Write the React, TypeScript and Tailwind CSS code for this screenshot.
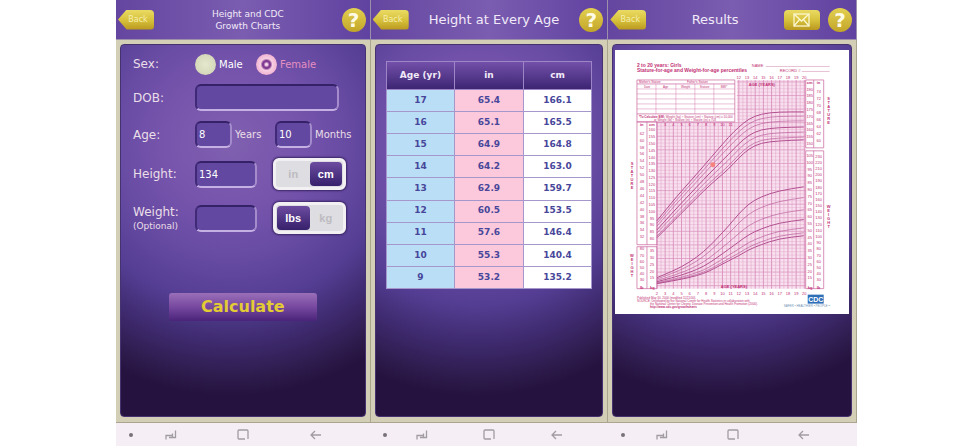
import { ReactNode, useState } from 'react';

const heights = [
  { age: 17, inch: '65.4', cm: '166.1' },
  { age: 16, inch: '65.1', cm: '165.5' },
  { age: 15, inch: '64.9', cm: '164.8' },
  { age: 14, inch: '64.2', cm: '163.0' },
  { age: 13, inch: '62.9', cm: '159.7' },
  { age: 12, inch: '60.5', cm: '153.5' },
  { age: 11, inch: '57.6', cm: '146.4' },
  { age: 10, inch: '55.3', cm: '140.4' },
  { age: 9, inch: '53.2', cm: '135.2' },
];

const HelpButton = () => (
  <button
    type="button"
    aria-label="Help"
    className="size-6 shrink-0 rounded-full bg-linear-to-b from-[#e3d050] to-[#c2a528] text-xl leading-6 font-bold text-[#fffbe6]"
  >
    ?
  </button>
);

const BackButton = () => (
  <button
    type="button"
    className="h-5 w-9 shrink-0 rounded-sm bg-linear-to-b from-[#eadb62] via-[#d8c23c] to-[#b9981f] pl-1 text-[8px] text-[#f6eeb0] [clip-path:polygon(0_50%,24%_0,100%_0,100%_100%,24%_100%)]"
  >
    Back
  </button>
);

const MailButton = () => (
  <button
    type="button"
    aria-label="Email results"
    className="mr-2 flex h-5 w-9 shrink-0 items-center justify-center rounded-sm bg-linear-to-b from-[#eadb62] via-[#d8c23c] to-[#b9981f]"
  >
    <svg width="17" height="14" viewBox="0 0 17 14" fill="none" stroke="#fbf6d0" strokeWidth="1.3">
      <rect x="1" y="1" width="15" height="12" />
      <path d="M1 1l7.500 7L16 1M1 13l5.500-6.500M16 13l-5.500-6.500" />
    </svg>
  </button>
);

const NavBar = () => (
  <div className="grid h-[23px] grid-cols-[12fr_19fr_38fr_19fr_12fr] place-items-center bg-[#f5eff5] text-[#a19ca2]">
    <span className="size-1 rounded-full bg-[#77727a]"></span>
    <button type="button" aria-label="Recent apps">
      <svg width="12" height="10" viewBox="0 0 12 10" fill="none" stroke="currentColor" strokeWidth="1.3">
        <path d="M1 9.500V5.500h6.500M4 7.500h6.500V0.500M7.500 7V3.500" />
      </svg>
    </button>
    <button type="button" aria-label="Home">
      <svg width="12" height="11" viewBox="0 0 12 11" fill="none" stroke="currentColor" strokeWidth="1.3">
        <path d="M8 10H2Q1 10 1 9V2Q1 1 2 1h8q1 0 1 1v8" />
      </svg>
    </button>
    <button type="button" aria-label="Go back">
      <svg width="12" height="10" viewBox="0 0 12 10" fill="none" stroke="currentColor" strokeWidth="1.3">
        <path d="M11 5H1M5 1L1 5l4 4" />
      </svg>
    </button>
  </div>
);

type ScreenProps = { title: ReactNode; action?: ReactNode; children: ReactNode };

const Screen = ({ title, action, children }: ScreenProps) => (
  <section className="flex min-w-0 flex-col">
    <header className="flex h-10 items-center border-r border-b border-[#9c8fa9] bg-linear-to-r from-[#6446a0] via-[#7a5cb0] to-[#6042a0] pr-1 pl-[2px]">
      <BackButton />
      <div className="flex-1 text-center text-[#f1eaf8]">{title}</div>
      {action}
      <HelpButton />
    </header>
    <div className="flex min-h-[383px] flex-1 border-r border-b border-[#aaa58e] bg-[#d2cfb6] p-1 pb-[5px]">
      <div className="min-w-0 flex-1 rounded-[4px] border border-[#463270] bg-[radial-gradient(circle_at_45%_96px,#8060b0_0px,#7654ac_70px,#664aa2_120px,#533d92_165px,#3f2b70_200px,#2e1c4e_235px,#25123e_255px)]">
        {children}
      </div>
    </div>
    <NavBar />
  </section>
);

const inputClass =
  'h-[27px] rounded-md border-2 border-t-[#352168] border-r-[#a48ccc] border-b-[#c4b0e2] border-l-[#402a78] bg-[#6248a0] px-[2px] text-[10px] text-white outline-none';

type ToggleProps = { label: string; options: string[]; value: string; onChange: (v: string) => void };

const UnitToggle = ({ label, options, value, onChange }: ToggleProps) => (
  <div
    role="group"
    aria-label={label}
    className="ml-4 flex h-8 w-[73px] rounded-md border-[3px] border-[#f3f0f4] bg-[#dedde1] p-px font-[Liberation_Sans,sans-serif] text-[11px] font-bold shadow-[0_0_2px_1px_#3a2465]"
  >
    {options.map((o) => (
      <button
        key={o}
        type="button"
        aria-pressed={o === value}
        onClick={() => onChange(o)}
        className={
          o === value
            ? 'flex-1 rounded-[4px] bg-linear-to-b from-[#6d4ca0] to-[#37206c] text-white'
            : 'flex-1 text-[#bdbbc1]'
        }
      >
        {o}
      </button>
    ))}
  </div>
);

const GrowthForm = () => {
  const [sex, setSex] = useState('female');
  const [heightUnit, setHeightUnit] = useState('cm');
  const [weightUnit, setWeightUnit] = useState('lbs');
  const rowClass = 'flex items-center';
  const labelClass = 'w-[62px] shrink-0 text-xs text-[#eadfe8]';
  const textClass = 'text-[10px] text-[#eadfe8]';
  return (
    <form className="px-3 pt-[7px]" onSubmit={(e) => e.preventDefault()}>
      <div className={rowClass + ' h-6'}>
        <span className={labelClass}>Sex:</span>
        <input
          id="male"
          type="radio"
          name="sex"
          checked={sex === 'male'}
          onChange={() => setSex('male')}
          className="size-[21px] appearance-none rounded-full bg-radial from-[#e6e8cf] to-[#ced1b0] checked:border-[6px] checked:border-[#f5bfdc] checked:bg-[#6b3f98]"
        />
        <label htmlFor="male" className="ml-[3px] w-[37px] text-[10px] text-white">
          Male
        </label>
        <input
          id="female"
          type="radio"
          name="sex"
          checked={sex === 'female'}
          onChange={() => setSex('female')}
          className="size-[21px] appearance-none rounded-full bg-[#e6e8cf] checked:bg-[radial-gradient(circle,#f5d5ec_0px,#f5d5ec_1px,#803b91_3px,#803b91_4px,#f7cfe2_6px,#efb0d0_11px)]"
        />
        <label htmlFor="female" className="ml-[3px] text-[10px] text-[#e58fc1]">
          Female
        </label>
      </div>
      <div className={rowClass + ' mt-2'}>
        <label htmlFor="dob" className={labelClass}>
          DOB:
        </label>
        <input id="dob" className={inputClass + ' w-36'} />
      </div>
      <div className={rowClass + ' mt-[10px]'}>
        <label htmlFor="years" className={labelClass}>
          Age:
        </label>
        <input id="years" defaultValue="8" className={inputClass + ' w-[37px]'} />
        <label htmlFor="years" className={textClass + ' w-[43px] pl-[3px]'}>
          Years
        </label>
        <input id="months" defaultValue="10" className={inputClass + ' w-[37px]'} />
        <label htmlFor="months" className={textClass + ' pl-[3px]'}>
          Months
        </label>
      </div>
      <div className={rowClass + ' mt-[10px]'}>
        <label htmlFor="height" className={labelClass}>
          Height:
        </label>
        <input id="height" defaultValue="134" className={inputClass + ' w-[62px]'} />
        <UnitToggle label="Height unit" options={['in', 'cm']} value={heightUnit} onChange={setHeightUnit} />
      </div>
      <div className={rowClass + ' mt-3'}>
        <label htmlFor="weight" className={labelClass}>
          Weight:
          <span className="block text-[9px]">(Optional)</span>
        </label>
        <input id="weight" className={inputClass + ' w-[62px]'} />
        <UnitToggle label="Weight unit" options={['lbs', 'kg']} value={weightUnit} onChange={setWeightUnit} />
      </div>
      <button
        type="submit"
        className="mx-auto mt-[59px] block h-7 w-[148px] rounded-[3px] bg-linear-to-b from-[#9a6fb8] via-[#77489f] to-[#4a247a] text-[16px] font-bold text-[#e3cc33]"
      >
        Calculate
      </button>
    </form>
  );
};

const HeightTable = () => (
  <div className="px-[10px] pt-4">
    <table className="h-[228px] w-full table-fixed border-collapse text-center text-[9px] font-bold text-[#47469a]">
      <thead>
        <tr className="h-7 bg-linear-to-b from-[#7350aa] to-[#3c2471] text-[9px] text-[#f1eaf8]">
          <th className="border border-[#9c86c8]">Age (yr)</th>
          <th className="border border-[#9c86c8]">in</th>
          <th className="border border-[#9c86c8]">cm</th>
        </tr>
      </thead>
      <tbody>
        {heights.map((h) => (
          <tr key={h.age}>
            <td className="border border-[#a596cc] bg-[#b9def5]">{h.age}</td>
            <td className="border border-[#a596cc] bg-[#fbc9db]">{h.inch}</td>
            <td className="border border-[#a596cc] bg-white">{h.cm}</td>
          </tr>
        ))}
      </tbody>
    </table>
  </div>
);

// x of an age, y of a stature (cm) and of a weight (kg)
const ageX = (age: number) => 658 + (age - 2) * 8.2;
const cmY = (cm: number) => 130 + (160 - cm) * 1.36;
const kgY = (kg: number) => 285 - (kg - 10) * 1.36;

const range = (from: number, to: number, step: number) => {
  const out: number[] = [];
  for (let n = from; n <= to; n += step) out.push(n);
  return out;
};

const xs = [658, 675, 690, 705, 717, 730, 740, 750, 762, 780, 805];
const statureTop = [221, 200, 183, 166, 152, 137, 127, 119, 114, 112, 112];
const statureLow = [238, 221, 206, 191, 180, 169, 158, 149, 143, 141, 140];
const weightTop = [278, 271, 263, 252, 240, 226, 214, 204, 197, 191, 187];
const weightLow = [284, 281, 278, 274, 268, 261, 256, 250, 245, 239, 236];

const curve = (top: number[], low: number[], part: number) => {
  const ys = top.map((t, i) => t + (low[i] - t) * part);
  let d = `M${xs[0]} ${ys[0]}`;
  for (let i = 1; i < xs.length - 1; i++) {
    d += `Q${xs[i]} ${ys[i]} ${(xs[i] + xs[i + 1]) / 2} ${(ys[i] + ys[i + 1]) / 2}`;
  }
  return d + `L${xs[xs.length - 1]} ${ys[xs.length - 1]}`;
};

const statureParts = [0, 0.15, 0.32, 0.54, 0.72, 0.9, 1];
const weightParts = [0, 0.22, 0.47, 0.67, 0.84, 0.94, 1];

const Numbers = ({ x, values, y }: { x: number; values: number[]; y: (n: number) => number }) => (
  <g fontSize="4" textAnchor="middle">
    {values.map((n) => (
      <text key={n} x={x} y={y(n) + 1.5}>
        {n}
      </text>
    ))}
  </g>
);

const SideLabel = ({ x, y, word }: { x: number; y: number; word: string }) => (
  <g fontSize="4" fontWeight="bold" textAnchor="middle">
    {word.split('').map((c, i) => (
      <text key={i} x={x} y={y + i * 4}>
        {c}
      </text>
    ))}
  </g>
);

const GrowthChart = () => (
  <svg
    viewBox="616 50 234 264"
    className="block w-full bg-white font-[Liberation_Sans,sans-serif]"
    role="img"
    aria-label="Stature-for-age and weight-for-age percentiles"
    fill="#c22f74"
  >
    <g fontSize="5" fontWeight="bold">
      <text x="638" y="67">2 to 20 years: Girls</text>
      <text x="638" y="72">Stature-for-age and Weight-for-age percentiles</text>
    </g>
    <text x="753" y="67" fontSize="4">NAME</text>
    <text x="781" y="72" fontSize="4">RECORD #</text>
    <path d="M767 66.500H831M803 71.500H831" stroke="#cf7fa8" strokeWidth="0.500" />

    <path d="M658 122H738V80H807V289H658z" fill="#f8e0ef" />
    <g stroke="#d98fbb" strokeWidth="0.500">
      {range(0, 36, 1).map((i) => {
        const x = 658 + i * 4.1;
        return <path key={i} d={`M${x} ${x < 738 ? 122 : 80}V289`} strokeWidth={i % 2 ? 0.4 : 0.9} />;
      })}
      {range(0, 60, 1).map((i) => {
        const y = 82 + i * 3.4;
        return <path key={i} d={`M${y < 122 ? 738 : 658} ${y}H807`} strokeWidth={i % 4 ? 0.3 : 0.7} />;
      })}
    </g>

    <g fill="none" stroke="#c9609a" strokeWidth="0.700">
      <path d="M638 122H658V245H638zM648 122V245M638 247H658V289H638zM648 247V289" />
      <path d="M807 80H825V148H807zM815 80V148M807 151H825V289H807zM815 151V289" />
      <path d="M638 80H736V122H638zM638 84H736M638 114H736" />
      <path d="M638 89H736M638 94H736M638 99H736M638 104H736M638 109H736M657 84V114M677 84V114M696 84V114M715 84V114" strokeWidth="0.400" />
    </g>
    <g fontSize="3">
      <text x="640" y="83">Mother's Stature</text>
      <text x="688" y="83">Father's Stature</text>
      <text x="645" y="88">Date</text>
      <text x="664" y="88">Age</text>
      <text x="682" y="88">Weight</text>
      <text x="701" y="88">Stature</text>
      <text x="722" y="88">BMI*</text>
      <text x="640" y="118">
        <tspan fontWeight="bold">*To Calculate BMI:</tspan> Weight (kg) ÷ Stature (cm) ÷ Stature (cm) x 10,000
      </text>
      <text x="655" y="121">or Weight (lb) ÷ Stature (in) ÷ Stature (in) x 703</text>
    </g>

    <g fontSize="4" textAnchor="middle">
      {range(12, 20, 1).map((a) => (
        <text key={a} x={ageX(a)} y="79">{a}</text>
      ))}
      {range(2, 20, 1).map((a) => (
        <text key={a} x={ageX(a)} y="295">{a}</text>
      ))}
      {range(3, 11, 1).map((a) => (
        <text key={a} x={ageX(a)} y="126">{a}</text>
      ))}
    </g>
    <g fontSize="4" fontWeight="bold">
      <text x="750" y="86">AGE (YEARS)</text>
      <text x="722" y="288">AGE (YEARS)</text>
      <text x="641" y="126">in</text>
      <text x="650" y="126">cm</text>
      <text x="808" y="84">cm</text>
      <text x="818" y="84">in</text>
      <text x="641" y="289">lb</text>
      <text x="651" y="289">kg</text>
      <text x="809" y="289">kg</text>
      <text x="818" y="289">lb</text>
    </g>
    <Numbers x={643} values={range(32, 62, 2)} y={(n) => cmY(n * 2.54)} />
    <Numbers x={653} values={range(80, 160, 5)} y={cmY} />
    <Numbers x={811} values={range(150, 190, 5)} y={cmY} />
    <Numbers x={820} values={range(60, 74, 2)} y={(n) => cmY(n * 2.54)} />
    <Numbers x={643} values={range(30, 80, 10)} y={(n) => kgY(n / 2.2)} />
    <Numbers x={653} values={range(15, 35, 5)} y={kgY} />
    <Numbers x={811} values={range(15, 105, 5)} y={kgY} />
    <Numbers x={820} values={range(30, 230, 10)} y={(n) => kgY(n / 2.2)} />
    <SideLabel x={633} y={165} word="STATURE" />
    <SideLabel x={633} y={257} word="WEIGHT" />
    <SideLabel x={830} y={100} word="STATURE" />
    <SideLabel x={830} y={208} word="WEIGHT" />

    <g fill="none" stroke="#b24f90">
      {statureParts.map((p, i) => (
        <path key={i} d={curve(statureTop, statureLow, p)} strokeWidth={i % 3 ? 0.6 : 1} />
      ))}
      {weightParts.map((p, i) => (
        <path key={i} d={curve(weightTop, weightLow, p)} strokeWidth={i % 3 ? 0.6 : 1} />
      ))}
    </g>
    <circle cx="714" cy="165" r="2.500" fill="#f5827c" />

    <g fontSize="3">
      <text x="638" y="299">Published May 30, 2000 (modified 11/21/00).</text>
      <text x="638" y="302">SOURCE: Developed by the National Center for Health Statistics in collaboration with</text>
      <text x="651" y="305">the National Center for Chronic Disease Prevention and Health Promotion (2000).</text>
      <text x="651" y="308" fontWeight="bold">http://www.cdc.gov/growthcharts</text>
    </g>
    <rect x="809" y="295" width="16" height="9" fill="#2f6fb8" />
    <text x="817" y="302" fontSize="7" fontWeight="bold" textAnchor="middle" fill="#fff">CDC</text>
    <text x="785" y="307" fontSize="3" fill="#6f8fb5">SAFER • HEALTHIER • PEOPLE™</text>
  </svg>
);

export default function App() {
  return (
    <main className="grid grid-cols-[255fr_238fr_249fr] bg-white px-29 font-[DejaVu_Sans,sans-serif]">
      <Screen title={<h1 className="text-[9px] leading-3">Height and CDC<br />Growth Charts</h1>}>
        <GrowthForm />
      </Screen>
      <Screen title={<h1 className="text-[13px]">Height at Every Age</h1>}>
        <HeightTable />
      </Screen>
      <Screen title={<h1 className="text-[13px]">Results</h1>} action={<MailButton />}>
        <div className="px-[2px] pt-[5px]">
          <GrowthChart />
        </div>
      </Screen>
    </main>
  );
}
